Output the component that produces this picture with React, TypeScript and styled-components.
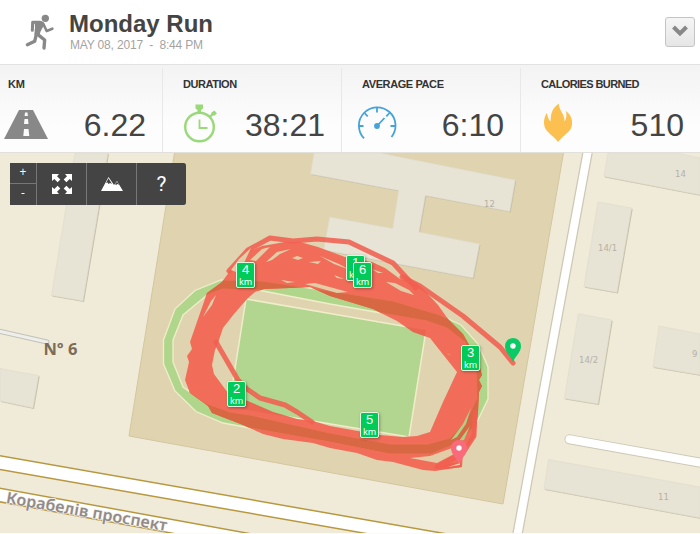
import styled, { createGlobalStyle } from "styled-components";

const GlobalStyle = createGlobalStyle`
  * {
    box-sizing: border-box;
  }
  body {
    margin: 0;
    background-color: #fff;
    font-family: "Liberation Sans", Arial, sans-serif;
    overflow: hidden;
  }
`;

const Page = styled.div`
  width: 700px;
  height: 534px;
  overflow: hidden;
`;

const Header = styled.header`
  display: flex;
  height: 64px;
  padding: 0 5px 0 25px;
`;
const HeaderIcon = styled.svg`
  width: 30px;
  height: 38px;
  margin-top: 13px;
`;
const Heading = styled.div`
  flex: 1;
  padding: 10px 0 0 14px;
`;
const Title = styled.h1`
  margin: 0;
  font-size: 24px;
  line-height: 28px;
  color: #444542;
`;
const DateLine = styled.div`
  padding-left: 1px;
  font-size: 12px;
  line-height: 14px;
  letter-spacing: -0.17px;
  color: #a3a3a3;
  white-space: pre;
`;
const MenuBtn = styled.button`
  display: flex;
  justify-content: center;
  width: 30px;
  height: 30px;
  margin-top: 17px;
  padding: 7px 0 0;
  border: 1px solid #c4c4c4;
  border-radius: 3px;
  background: linear-gradient(#f5f5f5, #e6e6e6);
`;

const Stats = styled.section`
  display: grid;
  grid-template-columns: 163px 179px 179px 179px;
  height: 88px;
  padding-top: 3px;
  border-top: 1px solid #e2e2e2;
  background: linear-gradient(#f3f3f3, #fdfdfd 70%);
`;
const Stat = styled.div<{ $pad: number }>`
  padding: 9px 16px 0 ${(props) => props.$pad}px;
  border-right: 1px solid #e8e8e8;
  &:last-child {
    border-right: none;
  }
`;
const Label = styled.div<{ $tracking: number }>`
  height: 14px;
  font-size: 11px;
  line-height: 14px;
  font-weight: 700;
  letter-spacing: ${(props) => props.$tracking}px;
  color: #333;
  white-space: nowrap;
`;
const StatRow = styled.div<{ $shift: number }>`
  display: flex;
  justify-content: space-between;
  height: 48px;
  margin: 11px 0 0 ${(props) => props.$shift}px;
`;
const Value = styled.span`
  font-size: 32px;
  line-height: 46px;
  color: #444;
`;

const MapArea = styled.main`
  position: relative;
  height: 382px;
  overflow: hidden;
  background-color: #f0ead8;
`;
const MapSvg = styled.svg`
  display: block;
`;
const MapText = styled.text`
  font-family: "Noto Sans", sans-serif;
`;
const HouseNumber = styled.text`
  font-family: "DejaVu Sans", sans-serif;
  font-size: 8.5px;
  fill: #b5b1a6;
`;

const Toolbar = styled.div`
  position: absolute;
  top: 11px;
  left: 10px;
  display: flex;
  gap: 1px;
  width: 176px;
  height: 42px;
  border-radius: 0 3px 3px 0;
  background-color: #777;
  overflow: hidden;
`;
const ZoomButtons = styled.div`
  display: grid;
  grid-template-rows: 20px 21px;
  gap: 1px;
  width: 26px;
`;
const Tool = styled.button`
  display: flex;
  flex: 1;
  justify-content: center;
  align-items: center;
  padding: 0;
  border: none;
  background-color: #444;
  color: white;
  font-family: Roboto, sans-serif;
  font-size: 21px;
`;
const ZoomTool = styled(Tool)`
  padding-bottom: 3px;
  font-family: "Open Sans", sans-serif;
  font-size: 12px;
  line-height: 12px;
`;

const KmMarker = styled.div<{ $x: number; $y: number }>`
  position: absolute;
  left: ${(props) => props.$x}px;
  top: ${(props) => props.$y}px;
  width: 19px;
  height: 26px;
  border: 1px solid #e6f5e0;
  border-radius: 2px;
  background-color: #00cb59;
  box-shadow: 1px 1px 3px rgba(0, 0, 0, 0.3);
  color: white;
  text-align: center;
  font-size: 13px;
  line-height: 14px;
`;
const Km = styled.div`
  font-family: "Noto Sans", sans-serif;
  font-size: 9px;
  line-height: 9px;
`;

const Runner = () => (
  <HeaderIcon viewBox="75 39 90 114">
    <g
      fill="none"
      stroke="#888"
      strokeWidth="10"
      strokeLinecap="round"
      strokeLinejoin="round"
    >
      <path d="M120 67H98L97 91" strokeWidth="9" />
      <path d="M130 72L140 93L157 86" strokeWidth="8" />
      <path d="M110 99L104 124L82 134" />
      <path d="M113 103L134 120L132 144" />
    </g>
    <circle cx="136" cy="55" r="11" fill="#888" />
    <path
      d="M104 63L124 63Q135 66 132 76L122 94L118 106L103 104L105 82Z"
      fill="#888"
    />
  </HeaderIcon>
);

const RoadIcon = () => (
  <svg width="44" height="42" viewBox="4 102 44 42">
    <path d="M19 110H33L48 139H4Z" fill="#888" />
    <path
      d="M25 112.500h2.500l.4 3.500h-3.300zM24.500 119h3.500l.5 5h-4.500zM24 129h4.500l.8 7h-6z"
      fill="#fafafa"
    />
  </svg>
);

const StopwatchIcon = () => (
  <svg width="34" height="42" viewBox="183 103.500 34 42">
    <g fill="none" stroke="#9ad979">
      <circle cx="199.500" cy="128.500" r="14.300" strokeWidth="2.400" />
      <path d="M199.500 121v8.500h8" strokeWidth="1.800" />
    </g>
    <path
      d="M195.500 106h7.500v4l-2 1.500v2.500h-3.500v-2.500l-2-1.500zM211.500 114l3-2 2.500 3-2.500 2-2 .3-2 2-1.500-1.500 2-2z"
      fill="#9ad979"
    />
  </svg>
);

const GaugeIcon = () => (
  <svg width="40" height="42" viewBox="357 105 40 42">
    <g fill="none" stroke="#45a3d9" strokeWidth="1.800">
      <path d="M364 141.300A18.300 18.300 0 1 1 391.500 140" />
      <path d="M377 110.500v5M358.500 129h5M390.500 129h5M364.500 116l3.200 3.400M389.500 116l-3.200 3.400M377 129l7.500-8" />
    </g>
    <circle cx="377" cy="129" r="2.900" fill="#45a3d9" />
  </svg>
);

const FlameIcon = () => (
  <svg width="30" height="42" viewBox="544 103.500 30 42">
    <path
      d="M559.700 105C560 112 566 116 565.500 123C567.500 120 568 117 566.800 112.500C572 116 573.500 121 573 126C572.500 133 565 136 559 143.500C554 136 545.500 134 545 125C544.800 121 546 118 547.500 114.500C549 118 549 121 551.500 123C552 116 552 111 559.700 105Z"
      fill="#fbc04f"
    />
  </svg>
);

const STATS = [
  {
    label: "KM",
    value: "6.22",
    icon: <RoadIcon />,
    pad: 8,
    shift: -4,
    tracking: -0.2,
  },
  {
    label: "DURATION",
    value: "38:21",
    icon: <StopwatchIcon />,
    pad: 20,
    shift: 0,
    tracking: -0.45,
  },
  {
    label: "AVERAGE PACE",
    value: "6:10",
    icon: <GaugeIcon />,
    pad: 20,
    shift: -5,
    tracking: -0.4,
  },
  {
    label: "CALORIES BURNED",
    value: "510",
    icon: <FlameIcon />,
    pad: 20,
    shift: 2,
    tracking: -0.6,
  },
];

const BUILDINGS = [
  "75,153 108,153 83,301 51.5,295.500",
  "314,153 310.500,174 398.700,190.500 392.700,228.500 329.700,217 323.700,250 473,278 479.500,244 419,232 425.300,195.500 509.700,211.500 515.300,180 380,153",
  "608,153 604,176.500 700,195 700,158 677,153",
  "598,202 631.700,208 617,292.500 584,286.700",
  "578.300,313.700 611.700,320 598,404 564.300,398.500",
  "659,326 653,367 700,375 700,334",
  "548.500,459.500 544,489 700,518 700,487",
  "0,368.500 38.700,375.500 33,408 0,401",
];

const HOUSE_NUMBERS = [
  { text: "14", x: 675, y: 176.5 },
  { text: "12", x: 484, y: 207 },
  { text: "14/1", x: 598, y: 251 },
  { text: "14/2", x: 579, y: 362.5 },
  { text: "9", x: 692, y: 357 },
  { text: "11", x: 658, y: 499.5 },
];

const TRACK =
  "M163.500 340L175 309L195 290.500L221 280L262 281L330 291L393 301L440 315L461 325L478 344L488 367L488 399L476 424L460 442L431 454L390 454L330 442L250 428L223 423L196 411.500L175 391L163.500 364Z" +
  "M173 340L183 315L207 295L222 289L258 290L330 304L427 321L447 328L465 342L476 367L477 398L466 421L450 438L428 444L390 444L330 433L250 415L230 412L205 403L183 387L173 362Z";

const BAND =
  "M190 342L207 293L222 282L232 268L250 251L262 246L285 242L300 242L318 247L345 257L372 262L385 268L400 279L417 283L425 291L438 305L448 319L463 334L472 350L480 368L482 375L479 380L482 386L479 392L478 412L475 437L463 453L462 467L435 471L423 470L393 462L377 460L357 453L330 448L313 443L283 439L263 434L243 425L212 413L208 406L190 393L185 380L189 362L187 356L192 349Z" +
  "M218 343L223 328L234 314L247 299L255 292L264 289L290 288L310 287L330 296L373 309L397 321L413 332L430 338L445 357L457 372L443 402L430 432L417 436L403 437L380 435L330 426L313 421L297 419L273 412L250 402L228 393L214 374L212 365L215 350Z";

// bits of ground left showing between the laps
const GAPS = [
  "231,270 239,259 251,248 244,263 236,272",
  "250,260 262,249 270,247 256,261",
  "266,262 277,252 291,249 280,254 272,260",
  "203,317 211,301 216,295 212,305",
  "292,258 297,256 303,258 298,260",
  "309,262 321,261 318,264",
  "305,284 315,283 348,292 337,293",
  "281,280 295,282 287,283",
  "386,282 395,283 409,290 414,295 401,291",
  "372,269 383,273 378,273",
  "320,256 339,264 350,270 334,264",
  "334,275 344,279 337,278",
  "447,353 452,356 448,354",
  "410,458 430,456 452,448 454,454 437,463",
  "448,467 460,463 460,465",
];

const MARKERS = [
  { km: 1, x: 346, y: 103 },
  { km: 6, x: 353, y: 110 },
  { km: 4, x: 236, y: 110 },
  { km: 3, x: 461, y: 193 },
  { km: 2, x: 227, y: 229 },
  { km: 5, x: 360, y: 260 },
];

interface PinProps {
  x: number;
  y: number;
  color: string;
}

const Pin = ({ x, y, color }: PinProps) => (
  <g transform={`translate(${x} ${y})`}>
    <path
      d="M0 0C-2-6-8-9-8-16A8 8 0 0 1 8-16C8-9 2-6 0 0Z"
      fill={color}
    />
    <circle cy="-16" r="2.700" fill="white" />
  </g>
);

const MapCanvas = () => (
  <MapSvg width="700" height="382" viewBox="0 152 700 382">
    <defs>
      <clipPath id="band">
        <path d={BAND} clipRule="evenodd" />
      </clipPath>
    </defs>
    <polygon
      points="175,150 129,436 503,504 564,150"
      fill="#e0d4b0"
      stroke="#d3c69f"
    />
    {BUILDINGS.map((points) => (
      <g key={points}>
        <polygon points={points} fill="#c5bfa8" transform="translate(1 1)" />
        <polygon
          points={points}
          fill="#e7e3d5"
          stroke="#dcd8c8"
          strokeWidth=".5"
        />
      </g>
    ))}
    {HOUSE_NUMBERS.map(({ text, x, y }) => (
      <HouseNumber key={text} x={x} y={y}>
        {text}
      </HouseNumber>
    ))}

    <g fill="none" strokeLinecap="round">
      <path d="M588.200 149L517 537" stroke="#cdc8b5" strokeWidth="10.500" />
      <path d="M588.200 149L517 537" stroke="#fff" strokeWidth="8" />
      <path d="M569.500 439.300L705 463.500" stroke="#cdc8b5" strokeWidth="10" />
      <path d="M569.500 439.300L705 463.500" stroke="#fff" strokeWidth="8" />
      <path d="M-4 330.500L47 342" stroke="#c2c0b7" strokeWidth="5" />
      <path d="M-4 330.500L47 342" stroke="#eeeeea" strokeWidth="3" />
      <path d="M-10 460.900L480 546.600" stroke="#b8983f" strokeWidth="15" />
      <path d="M-10 460.900L480 546.600" stroke="#fff" strokeWidth="12" />
      <path d="M-10 493.200L300 549.600" stroke="#b8983f" strokeWidth="15" />
      <path d="M-10 493.200L300 549.600" stroke="#fff" strokeWidth="12" />
    </g>

    <path
      d={TRACK}
      fill="#b0d68c"
      fillRule="evenodd"
      stroke="#f0edca"
      strokeWidth="1.300"
    />
    <polygon
      points="246,299 426,330 409,437 229,407"
      fill="#b2d68f"
      stroke="#f0edca"
      strokeWidth="1.500"
    />

    <path d={BAND} fill="#f26957" fillRule="evenodd" opacity=".97" />
    <g clipPath="url(#band)">
      <path d={TRACK} fill="#d86843" fillRule="evenodd" stroke="#ed7054" />
      <polygon
        points="246,299 426,330 409,437 229,407"
        fill="#e35f47"
        opacity=".5"
      />
    </g>
    <path
      d="M451 440L463 424L471 408L466 424L457 437ZM459 441L470 426L464 440Z"
      fill="#b0cf86"
    />
    <g
      fill="none"
      stroke="#f05f50"
      strokeOpacity=".88"
      strokeWidth="5"
      strokeLinecap="round"
      strokeLinejoin="round"
    >
      <path d="M229 271L248 250L270 238L293 241L317 239L349 242L393 263L416 288" />
      <path d="M402 277L420 286L463 316L500 347L513 363" />
      <path d="M216 342L238 380L247 389L260 398L285 405L297 412L312 422" />
      <path d="M475 412L474 436L463 453L437 467L459 465" />
    </g>
    {GAPS.map((points) => (
      <polygon key={points} points={points} fill="#e2cda7" />
    ))}

    <Pin x={513} y={362} color="#0bc964" />
    <Pin x={459} y={464} color="#f96b7b" />

    <MapText
      x="43.500"
      y="355"
      fontSize="16.500"
      fontWeight="700"
      fill="#7c6c57"
      textLength="34"
    >
      Nº 6
    </MapText>
    <MapText
      x="5.500"
      y="503"
      fontSize="16"
      fontWeight="600"
      fill="#918a8a"
      stroke="#f5f1e6"
      strokeWidth="1.500"
      paintOrder="stroke"
      textLength="163"
      transform="rotate(10 6 503)"
    >
      Корабелів проспект
    </MapText>
    <path d="M0 152.500H700" stroke="#e2e0da" />
    <path d="M0 533.500H700" stroke="#fbfaf6" />
  </MapSvg>
);

const App = () => {
  return (
    <Page>
      <GlobalStyle />
      <Header>
        <Runner />
        <Heading>
          <Title>Monday Run</Title>
          <DateLine>{"MAY 08, 2017  -  8:44 PM"}</DateLine>
        </Heading>
        <MenuBtn>
          <svg width="16" height="12" viewBox="0 0 16 12">
            <path
              d="M1.500 2L8 8.500L14.500 2"
              fill="none"
              stroke="#888"
              strokeWidth="4"
            />
          </svg>
        </MenuBtn>
      </Header>
      <Stats>
        {STATS.map(({ label, value, icon, pad, shift, tracking }) => (
          <Stat key={label} $pad={pad}>
            <Label $tracking={tracking}>{label}</Label>
            <StatRow $shift={shift}>
              {icon}
              <Value>{value}</Value>
            </StatRow>
          </Stat>
        ))}
      </Stats>
      <MapArea>
        <MapCanvas />
        {MARKERS.map(({ km, x, y }) => (
          <KmMarker key={km} $x={x} $y={y}>
            {km}
            <Km>km</Km>
          </KmMarker>
        ))}
        <Toolbar>
          <ZoomButtons>
            <ZoomTool>+</ZoomTool>
            <ZoomTool>-</ZoomTool>
          </ZoomButtons>
          <Tool>
            <svg width="20" height="20" viewBox="0 0 20 20" fill="white">
              <path d="M0 0h7L5 2.300 8.300 5.600 5.600 8.300 2.300 5 0 7zM20 0h-7l2 2.300-3.300 3.300 2.700 2.700L17.700 5 20 7zM0 20h7l-2-2.300 3.300-3.300-2.700-2.700L2.300 15 0 13zM20 20h-7l2-2.300-3.300-3.300 2.700-2.700 3.300 3.300 2.300-2z" />
            </svg>
          </Tool>
          <Tool>
            <svg width="22" height="16" viewBox="0 0 22 16">
              <path d="M0 15L7.500 1L13 9L16 5L22 15Z" fill="white" />
              <path
                d="M5 7L7.500 2.300L11 8L9 7L7.500 8L6.500 6.500ZM14 8L16 5.700L18.500 9L16.500 8L15 9Z"
                fill="#444"
              />
            </svg>
          </Tool>
          <Tool>?</Tool>
        </Toolbar>
      </MapArea>
    </Page>
  );
};

export default App;
